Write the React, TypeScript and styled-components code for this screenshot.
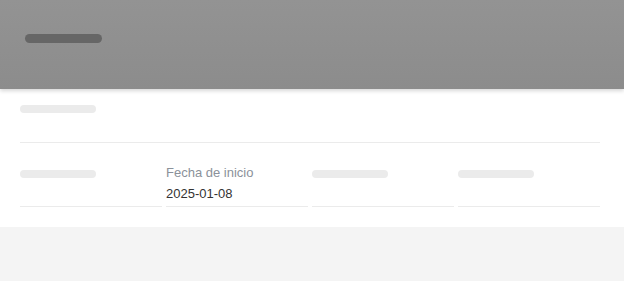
import React from 'react';
// styles
import styled, { createGlobalStyle } from 'styled-components';

type Field = {
  label?: string;
  value?: string;
};

const fields: Field[] = [{}, { label: 'Fecha de inicio', value: '2025-01-08' }, {}, {}];

const App: React.FC = () => {
  return (
    <>
      <GlobalStyle />
      <Header>
        <HeaderBar />
      </Header>

      <Panel>
        <TitleSection>
          <Skeleton />
        </TitleSection>

        <FieldRow>
          {fields.map((field, i) => (
            <FieldCell key={i}>
              {field.label ? (
                <>
                  <FieldLabel>{field.label}</FieldLabel>
                  <FieldValue>{field.value}</FieldValue>
                </>
              ) : (
                <Skeleton $inset />
              )}
            </FieldCell>
          ))}
        </FieldRow>
      </Panel>
    </>
  );
};

const GlobalStyle = createGlobalStyle`
  html, body {
    margin: 0;
    padding: 0;
    background: #f4f4f4;
    font-family: 'Liberation Sans', Arial, sans-serif;
  }
`;

const Header = styled.header`
  position: relative;
  z-index: 1;
  height: 89px;
  box-sizing: border-box;
  padding: 34px 0 0 25px;
  background: linear-gradient(#939393, #8c8c8c);
  box-shadow: 0 2px 4px rgba(0, 0, 0, 0.16);
`;

const HeaderBar = styled.div`
  width: 77px;
  height: 9px;
  border-radius: 5px;
  background: #666666;
`;

const Panel = styled.section`
  background: #ffffff;
  padding: 16px 24px 20px 20px;
`;

const TitleSection = styled.div`
  height: 37px;
  border-bottom: 1px solid #ebebeb;
`;

const Skeleton = styled.div<{ $inset?: boolean }>`
  width: 76px;
  height: 8px;
  border-radius: 4px;
  background: #ebebeb;
  margin-top: ${(props) => (props.$inset ? '7px' : '0')};
`;

const FieldRow = styled.div`
  display: grid;
  grid-template-columns: repeat(4, 1fr);
  gap: 4px;
  margin-top: 19px;
`;

const FieldCell = styled.div`
  height: 39px;
  padding: 1px 0 4px;
  border-bottom: 1px solid #ebebeb;
`;

const FieldLabel = styled.div`
  font-size: 13px;
  line-height: 20px;
  color: #8b919a;
`;

const FieldValue = styled.div`
  margin-top: 2px;
  font-size: 13px;
  line-height: 17px;
  color: #333333;
`;

export default App;
